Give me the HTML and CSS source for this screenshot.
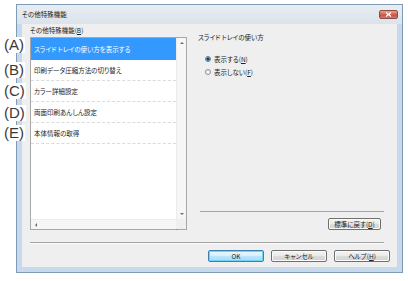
FILE: index.html
```html
<!DOCTYPE html>
<html lang="ja">
<head>
<meta charset="utf-8">
<title>その他特殊機能</title>
<link rel="stylesheet" href="styles.css">
</head>
<body>
<div class="dialog">
  <div class="titlebar">
    <span class="title">その他特殊機能</span>
    <span class="close"><svg width="7" height="5" viewBox="0 0 7 5"><path d="M1 0.5 L6 4.5 M6 0.5 L1 4.5" stroke="#fff" stroke-width="1.3"/></svg></span>
  </div>
  <div class="client">
    <div class="main">
      <div class="left">
        <div class="group-label">その他特殊機能(<u>B</u>)</div>
        <div class="listbox">
          <div class="items">
            <div class="item selected">スライド トレイの使い方を表示する</div>
            <div class="item">印刷データ圧縮方法の切り替え</div>
            <div class="item">カラー詳細設定</div>
            <div class="item">両面印刷あんしん設定</div>
            <div class="item">本体情報の取得</div>
          </div>
          <div class="vscroll">
            <span class="sbtn"><i class="arr up"></i></span>
            <span class="sbtn"><i class="arr down"></i></span>
          </div>
          <div class="hscroll">
            <span class="sbtn"><i class="arr left"></i></span>
            <span class="sbtn"><i class="arr right"></i></span>
          </div>
          <div class="corner"></div>
        </div>
      </div>
      <div class="right">
        <div class="heading">スライド トレイの使い方</div>
        <div class="radios">
          <div class="radio-row"><span class="radio checked"></span><span>表示する(<u>N</u>)</span></div>
          <div class="radio-row"><span class="radio"></span><span>表示しない(<u>F</u>)</span></div>
        </div>
        <div class="rule"></div>
        <div class="reset-row"><span class="btn reset">標準に戻す(<u>D</u>)</span></div>
      </div>
    </div>
    <div class="sep"></div>
    <div class="buttons">
      <span class="btn default">OK</span>
      <span class="btn">キャンセル</span>
      <span class="btn">ヘルプ(<u>H</u>)</span>
    </div>
  </div>
</div>
<div class="callouts">
  <span class="callout c-a">(A)</span>
  <span class="callout c-b">(B)</span>
  <span class="callout c-c">(C)</span>
  <span class="callout c-d">(D)</span>
  <span class="callout c-e">(E)</span>
</div>
</body>
</html>
```

FILE: styles.css
```css
* { box-sizing: border-box; }
html, body { margin: 0; }
body {
  width: 408px;
  height: 281px;
  overflow: hidden;
  background: #fff;
  padding: 4px 0 0 16px;
  position: relative;
  font-family: "Noto Sans CJK JP", sans-serif;
  font-size: 6.5px;
  font-feature-settings: "palt";
  color: #222;
}
u { text-decoration: underline; text-underline-offset: 1px; }

.dialog {
  width: 387px;
  height: 269px;
  border: 1px solid #7f9bb7;
  background: #c6d9ed;
  display: flex;
  flex-direction: column;
}
.titlebar {
  height: 19px;
  flex: none;
  display: flex;
  align-items: flex-start;
  padding-left: 5px;
  background: linear-gradient(#e8edf2, #dbe3eb);
}
.title { line-height: 19px; color: #1a1a1a; }
.close {
  margin-left: auto;
  margin-top: 5px;
  margin-right: 4px;
  width: 19px;
  height: 9px;
  border: 1px solid #8e4a45;
  border-radius: 2px;
  background: linear-gradient(#e8a394, #d0604e 50%, #c2483a 51%, #d27b6c);
  display: flex;
  align-items: center;
  justify-content: center;
}
.close svg { display: block; }

.client {
  flex: 1;
  margin: 0 5px 5px 5px;
  background: #efefef;
  display: flex;
  flex-direction: column;
}
.main {
  display: flex;
  padding: 2px 13px 0 8px;
}
.left { width: 157px; flex: none; }
.group-label { height: 9px; line-height: 9px; margin-bottom: 2px; }

.listbox {
  height: 193px;
  border: 1px solid #a7a7a7;
  background: #fff;
  display: grid;
  grid-template-columns: 1fr 10px;
  grid-template-rows: 1fr 10px;
}
.items { padding: 0; }
.item {
  height: 21px;
  line-height: 20px;
  padding-left: 3px;
  border-bottom: 1px dashed #dadada;
  color: #222;
}
.item.selected {
  height: 22px;
  line-height: 22px;
  background: #3399ff;
  color: #fff;
  border-bottom: none;
}
.vscroll {
  background: #f6f6f6;
  border-left: 1px solid #ececec;
  display: flex;
  flex-direction: column;
  justify-content: space-between;
}
.hscroll {
  background: #f6f6f6;
  border-top: 1px solid #ececec;
  display: flex;
  justify-content: space-between;
}
.corner { background: #efefef; }
.sbtn {
  width: 10px;
  height: 10px;
  display: flex;
  align-items: center;
  justify-content: center;
}
.arr { display: block; width: 0; height: 0; }
.arr.up { border-left: 2px solid transparent; border-right: 2px solid transparent; border-bottom: 2px solid #6d6d6d; }
.arr.down { border-left: 2px solid transparent; border-right: 2px solid transparent; border-top: 2px solid #6d6d6d; }
.arr.left { border-top: 2px solid transparent; border-bottom: 2px solid transparent; border-right: 2px solid #6d6d6d; }
.arr.right { border-top: 2px solid transparent; border-bottom: 2px solid transparent; border-left: 2px solid #6d6d6d; }

.right {
  flex: 1;
  margin-left: 11px;
  margin-top: 6px;
  display: flex;
  flex-direction: column;
}
.heading { line-height: 10px; height: 10px; }
.radios {
  margin-top: 12px;
  padding-left: 7px;
  display: flex;
  flex-direction: column;
  gap: 3px;
}
.radio-row { height: 10px; display: flex; align-items: center; gap: 3px; }
.radio {
  width: 6px;
  height: 6px;
  border-radius: 50%;
  border: 1px solid #8e8f8f;
  background: linear-gradient(#e6e6e6, #fbfbfb);
}
.radio.checked {
  border-color: #5b7d9c;
  background: radial-gradient(circle, #1c3a5c 0 1.2px, #88aacc 1.8px, #d6e5f2 3px);
}
.rule {
  margin-top: auto;
  margin-left: 2px;
  height: 1px;
  background: #a4a4a4;
}
.reset-row {
  margin-top: 6px;
  display: flex;
  justify-content: flex-end;
  padding-right: 3px;
}
.btn {
  height: 12px;
  width: 56px;
  border: 1px solid #707070;
  border-radius: 2px;
  background: linear-gradient(#f3f3f3, #ebebeb 45%, #dddddd 50%, #d2d2d2);
  box-shadow: inset 0 0 0 1px #fbfbfb;
  display: flex;
  align-items: center;
  justify-content: center;
  line-height: 10px;
  color: #222;
}
.btn.reset { width: 53px; }
.btn.default {
  border-color: #3c7fb1;
  box-shadow: inset 0 0 0 1px #6fd3f5;
  background: linear-gradient(#eaf6fd, #d9f0fc 45%, #bee6fd 50%, #a7d9f5);
}

.sep {
  margin: 12px 13px 0 8px;
  height: 2px;
  border-top: 1px solid #a4a4a4;
  border-bottom: 1px solid #fbfbfb;
}
.buttons {
  margin-top: 6px;
  display: flex;
  justify-content: flex-end;
  gap: 7px;
  padding-right: 7px;
}

.callouts {
  position: absolute;
  left: 4px;
  top: 0;
}
.callout {
  position: absolute;
  left: 0;
  font-family: "Liberation Sans", Arial, sans-serif;
  font-size: 15px;
  line-height: 16px;
  color: #3a3a3a;
  white-space: nowrap;
  background: #fff;
  padding-right: 1px;
}
.c-a { top: 37px; }
.c-b { top: 62px; }
.c-c { top: 83px; }
.c-d { top: 105px; }
.c-e { top: 125px; }
```
